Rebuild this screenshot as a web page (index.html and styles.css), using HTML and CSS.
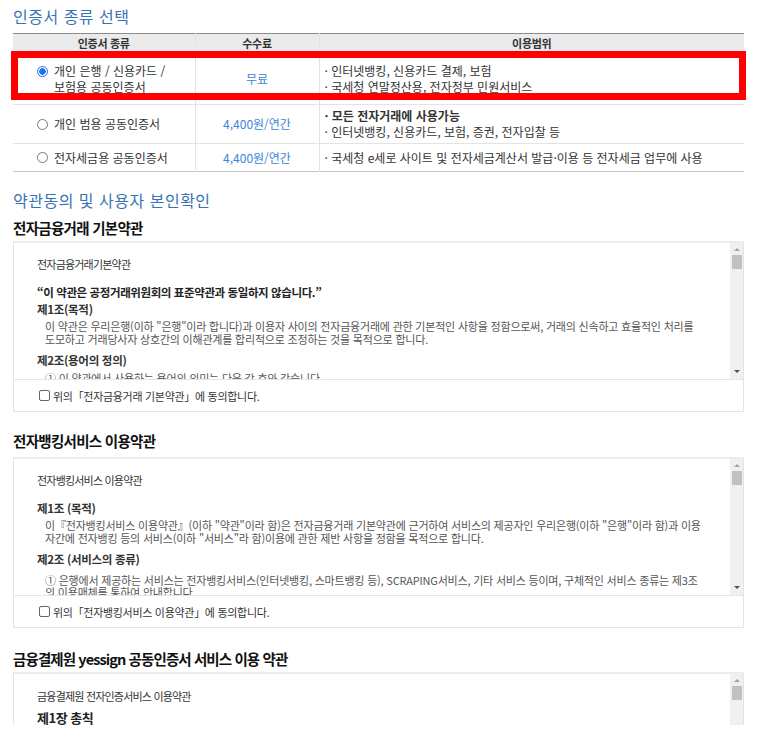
FILE: index.html
```html
<!DOCTYPE html>
<html lang="ko">
<head>
    <meta charset="UTF-8">
    <meta name="viewport" content="width=device-width, initial-scale=1.0">
    <title>인증서 종류 선택</title>
    <link rel="stylesheet" href="styles.css">
</head>
<body>
    <div class="page">
        <h2 class="sec-title first">인증서 종류 선택</h2>
        <div class="table-wrap">
            <table class="cert-table">
                <colgroup>
                    <col class="w1">
                    <col class="w2">
                    <col>
                </colgroup>
                <thead>
                    <tr>
                        <th>인증서 종류</th>
                        <th>수수료</th>
                        <th>이용범위</th>
                    </tr>
                </thead>
                <tbody>
                    <tr class="row1">
                        <td class="c1">
                            <div class="opt"><span class="radio on"></span><span>개인 은행 / 신용카드 /<br>보험용 공동인증서</span></div>
                        </td>
                        <td class="c2 fee">무료</td>
                        <td class="c3">
                            <p>· 인터넷뱅킹, 신용카드 결제, 보험</p>
                            <p>· 국세청 연말정산용, 전자정부 민원서비스</p>
                        </td>
                    </tr>
                    <tr class="row2">
                        <td class="c1">
                            <div class="opt"><span class="radio"></span><span>개인 범용 공동인증서</span></div>
                        </td>
                        <td class="c2 fee">4,400원/연간</td>
                        <td class="c3">
                            <p class="strong">· 모든 전자거래에 사용가능</p>
                            <p>· 인터넷뱅킹, 신용카드, 보험, 증권, 전자입찰 등</p>
                        </td>
                    </tr>
                    <tr class="row3">
                        <td class="c1">
                            <div class="opt"><span class="radio"></span><span>전자세금용 공동인증서</span></div>
                        </td>
                        <td class="c2 fee">4,400원/연간</td>
                        <td class="c3">
                            <p>· 국세청 e세로 사이트 및 전자세금계산서 발급·이용 등 전자세금 업무에 사용</p>
                        </td>
                    </tr>
                </tbody>
            </table>
            <div class="highlight"></div>
        </div>

        <h2 class="sec-title second">약관동의 및 사용자 본인확인</h2>

        <h3 class="terms-title t1">전자금융거래 기본약관</h3>
        <div class="terms">
            <div class="terms-body">
                <div class="terms-text">
                    <p class="doc-name">전자금융거래기본약관</p>
                    <p class="notice">“이 약관은 공정거래위원회의 표준약관과 동일하지 않습니다.”</p>
                    <p class="art a1">제1조(목적)</p>
                    <p class="para p1">이 약관은 우리은행(이하 "은행"이라 합니다)과 이용자 사이의 전자금융거래에 관한 기본적인 사항을 정함으로써, 거래의 신속하고 효율적인 처리를<br>도모하고 거래당사자 상호간의 이해관계를 합리적으로 조정하는 것을 목적으로 합니다.</p>
                    <p class="art a2">제2조(용어의 정의)</p>
                    <p class="para p2">① 이 약관에서 사용하는 용어의 의미는 다음 각 호와 같습니다.</p>
                </div>
                <div class="scrollbar">
                    <span class="arrow up"></span>
                    <span class="thumb"></span>
                    <span class="arrow down"></span>
                </div>
            </div>
            <label class="agree"><span class="check"></span>위의「전자금융거래 기본약관」에 동의합니다.</label>
        </div>

        <h3 class="terms-title t2">전자뱅킹서비스 이용약관</h3>
        <div class="terms">
            <div class="terms-body">
                <div class="terms-text">
                    <p class="doc-name">전자뱅킹서비스 이용약관</p>
                    <p class="art b1">제1조 (목적)</p>
                    <p class="para q1">이『전자뱅킹서비스 이용약관』(이하 "약관"이라 함)은 전자금융거래 기본약관에 근거하여 서비스의 제공자인 우리은행(이하 "은행"이라 함)과 이용<br>자간에 전자뱅킹 등의 서비스(이하 "서비스"라 함)이용에 관한 제반 사항을 정함을 목적으로 합니다.</p>
                    <p class="art b2">제2조 (서비스의 종류)</p>
                    <p class="para q2">① 은행에서 제공하는 서비스는 전자뱅킹서비스(인터넷뱅킹, 스마트뱅킹 등), SCRAPING서비스, 기타 서비스 등이며, 구체적인 서비스 종류는 제3조<br>의 이용매체를 통하여 안내합니다.</p>
                </div>
                <div class="scrollbar">
                    <span class="arrow up"></span>
                    <span class="thumb"></span>
                    <span class="arrow down"></span>
                </div>
            </div>
            <label class="agree"><span class="check"></span>위의「전자뱅킹서비스 이용약관」에 동의합니다.</label>
        </div>

        <h3 class="terms-title t3">금융결제원 yessign 공동인증서 서비스 이용 약관</h3>
        <div class="terms last">
            <div class="terms-body short">
                <div class="terms-text">
                    <p class="doc-name">금융결제원 전자인증서비스 이용약관</p>
                    <p class="chapter">제1장 총칙</p>
                </div>
                <div class="scrollbar">
                    <span class="arrow up"></span>
                    <span class="thumb"></span>
                </div>
            </div>
        </div>
    </div>
</body>
</html>
```

FILE: styles.css
```css
body {
    margin: 0;
    font-family: "Noto Sans CJK KR", "Noto Sans", sans-serif;
    color: #333;
    background: #fff;
}
p {
    margin: 0;
}
.page {
    width: 731px;
    padding-left: 13px;
}
.sec-title {
    margin: 0;
    font-size: 16px;
    font-weight: 400;
    color: #3a73b4;
    letter-spacing: 0.5px;
}
.sec-title.first {
    height: 33px;
    line-height: 32px;
}
.sec-title.second {
    margin-top: 16px;
    line-height: 24px;
}

/* certificate table */
.table-wrap {
    position: relative;
}
.cert-table {
    width: 731px;
    table-layout: fixed;
    border-collapse: collapse;
    border-top: 1px solid #8c8c8c;
    border-bottom: 1px solid #c4c4c4;
    font-size: 12px;
}
.w1 {
    width: 182px;
}
.w2 {
    width: 124px;
}
.cert-table th {
    height: 19px;
    padding: 0;
    background: #ebebeb;
    font-size: 11px;
    font-weight: 700;
    color: #333;
    line-height: 19px;
    letter-spacing: -0.3px;
}
.cert-table td {
    padding: 0;
    border-top: 1px solid #e3e3e3;
    line-height: 16px;
    color: #333;
    vertical-align: middle;
}
.cert-table th + th,
.cert-table td + td {
    border-left: 1px solid #e3e3e3;
}
.cert-table td.c1 {
    padding-left: 24px;
}
.cert-table td.c2 {
    text-align: center;
}
.cert-table td.c3 {
    padding-left: 5px;
}
.cert-table td.fee {
    color: #3b86d6;
}
.row1 td {
    height: 50px;
}
.row2 td {
    height: 38px;
}
.row3 td {
    height: 27px;
}
.strong {
    font-weight: 700;
}
.opt {
    display: flex;
    align-items: flex-start;
}
.row2 .opt,
.row3 .opt {
    align-items: center;
}
.radio {
    flex: none;
    width: 9px;
    height: 9px;
    margin: 3px 6px 0 0;
    border: 1px solid #7a7a7a;
    border-radius: 50%;
    background: #fff;
}
.row2 .radio,
.row3 .radio {
    margin-top: 0;
}
.radio.on {
    border-color: #1a73e8;
    background: radial-gradient(circle, #1a73e8 0 3px, #fff 3.5px);
}
.highlight {
    position: absolute;
    left: -2px;
    top: 18px;
    width: 721px;
    height: 35px;
    border: 7px solid #ff0000;
}

/* terms boxes */
.terms-title {
    margin: 0;
    font-size: 14.5px;
    font-weight: 700;
    color: #111;
    letter-spacing: -0.7px;
    line-height: 26px;
}
.terms-title.t1 {
    margin-top: 3px;
}
.terms-title.t2 {
    margin-top: 16px;
    padding-bottom: 3px;
}
.terms-title.t3 {
    margin-top: 18px;
    letter-spacing: -0.9px;
}
.terms {
    border: 1px solid #e4e4e4;
    border-top: 2px solid #ececec;
}
.terms.last {
    border-bottom: 0;
}
.terms-body {
    display: flex;
    height: 136px;
}
.terms-body.short {
    height: 51px;
}
.terms-text {
    flex: 1;
    overflow: hidden;
    padding: 13px 20px 0 23px;
    font-size: 11px;
    line-height: 13px;
    color: #555;
    letter-spacing: -0.2px;
}
.short .terms-text {
    padding-top: 14px;
}
.doc-name {
    color: #333;
    height: 16px;
    line-height: 16px;
    letter-spacing: -0.8px;
}
.notice {
    margin-top: 12px;
    font-size: 11.5px;
    font-weight: 700;
    color: #222;
    line-height: 16px;
    letter-spacing: -0.4px;
}
.art {
    font-size: 11.5px;
    font-weight: 700;
    color: #333;
    line-height: 16px;
    letter-spacing: -0.3px;
}
.a1 {
    margin-top: 1px;
}
.p1 {
    margin-top: 3px;
}
.a2 {
    margin-top: 6px;
}
.p2 {
    margin-top: 4px;
}
.b1 {
    margin-top: 12px;
}
.q1 {
    margin-top: 3px;
}
.b2 {
    margin-top: 6px;
}
.q2 {
    margin-top: 7px;
    line-height: 12px;
}
.para {
    padding-left: 8px;
}
.chapter {
    margin-top: 6px;
    font-size: 13px;
    font-weight: 700;
    color: #222;
    line-height: 16px;
    letter-spacing: -0.5px;
}
.scrollbar {
    flex: none;
    width: 13px;
    background: #f0f0f0;
    display: flex;
    flex-direction: column;
    align-items: center;
}
.arrow {
    width: 0;
    height: 0;
    border-left: 3px solid transparent;
    border-right: 3px solid transparent;
}
.arrow.up {
    margin-top: 5px;
    border-bottom: 3px solid #a3a3a3;
}
.arrow.down {
    margin-top: auto;
    margin-bottom: 6px;
    border-top: 3px solid #505050;
}
.thumb {
    width: 10px;
    height: 14px;
    margin-top: 4px;
    background: #c1c1c1;
}
.agree {
    display: flex;
    align-items: center;
    height: 31px;
    padding-left: 25px;
    border-top: 1px solid #e6e6e6;
    font-size: 11px;
    color: #333;
    letter-spacing: -0.3px;
}
.check {
    width: 9px;
    height: 9px;
    margin-right: 3px;
    border: 1px solid #666;
    border-radius: 2px;
    background: #fff;
}
```
